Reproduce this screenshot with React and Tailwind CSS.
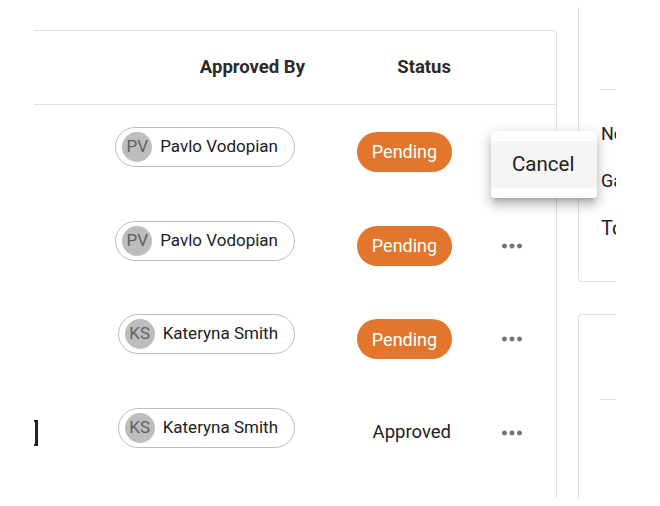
import React from "react";

function Dots() {
  return (
    <svg width="30" height="30" viewBox="0 0 24 24" fill="#757575">
      <path d="M6 10c-1.1 0-2 .9-2 2s.9 2 2 2 2-.9 2-2-.9-2-2-2m12 0c-1.1 0-2 .9-2 2s.9 2 2 2 2-.9 2-2-.9-2-2-2m-6 0c-1.1 0-2 .9-2 2s.9 2 2 2 2-.9 2-2-.9-2-2-2" />
    </svg>
  );
}

function Chip({ initials, name }) {
  return (
    <div className="flex shrink-0 items-center h-[40px] rounded-full border border-[#bdbdbd] pl-[6px] pr-[16px] gap-[8px] whitespace-nowrap">
      <div className="w-[30px] h-[30px] shrink-0 rounded-full bg-[#bdbdbd] flex items-center justify-center text-[17px] text-[#616161]">
        {initials}
      </div>
      <span className="text-[17px] text-[#212121]">{name}</span>
    </div>
  );
}

function Pending() {
  return (
    <div className="h-[40px] w-[95px] rounded-full bg-[#e2762c] flex items-center justify-center text-white text-[18px]">
      Pending
    </div>
  );
}

const rows = [
  { initials: "PV", name: "Pavlo Vodopian", status: "pending", dots: false },
  { initials: "PV", name: "Pavlo Vodopian", status: "pending", dots: true },
  { initials: "KS", name: "Kateryna Smith", status: "pending", dots: true },
  { initials: "KS", name: "Kateryna Smith", status: "approved", dots: true, mark: true },
];

export default function App() {
  return (
    <div className="relative w-[660px] h-[506px] bg-white overflow-hidden font-['Roboto',sans-serif] text-[#212121]">
      <div className="flex items-start h-[498px]">
        <div className="w-[34px] shrink-0" />
        <div className="w-[523px] shrink-0 h-[498px] overflow-hidden pt-[30px]">
          <div className="border-t border-r border-[#e0e0e0] rounded-tr-[4px] h-[600px]">
            <div className="h-[74px] border-b border-[#e0e0e0] flex items-center font-bold text-[18.5px] text-[#2b2b2b] whitespace-nowrap">
              <div className="w-[66px]" />
              <div className="w-[221px] flex justify-end pr-[16px]">Approved By</div>
              <div className="w-[147px] flex justify-end pr-[17px]">Status</div>
              <div className="flex-1" />
            </div>
            {rows.map((r, i) => (
              <div key={i} className="h-[93.7px] flex items-center">
                <div className="w-[66px] flex items-center">
                  {r.mark && (
                    <div className="w-[4px] h-[26px] border-r-[3px] border-t-2 border-b-2 border-[#222]" />
                  )}
                </div>
                <div className="w-[221px] flex justify-end pr-[26px] pb-[10px]">
                  <Chip initials={r.initials} name={r.name} />
                </div>
                <div className="w-[147px] flex justify-end pr-[16px]">
                  {r.status === "pending" ? (
                    <Pending />
                  ) : (
                    <span className="text-[18.5px] text-[#212121] pr-[1px]">Approved</span>
                  )}
                </div>
                <div className="flex-1 pl-[29px] flex items-center">
                  {r.dots && <Dots />}
                </div>
              </div>
            ))}
          </div>
        </div>
        <div className="w-[21px] shrink-0" />
        <div className="w-[38px] shrink-0 h-[498px] overflow-hidden pt-[7px]">
          <div className="h-[275px] border-l border-b border-[#e0e0e0] rounded-bl-[4px] pt-[82px] w-[80px]">
            <div className="ml-[21px] h-px bg-[#e0e0e0]" />
            <div className="pt-[20px] pl-[22px] whitespace-nowrap">
              <div className="h-[47px] flex items-center text-[18px]">Net amount</div>
              <div className="h-[47px] flex items-center text-[18px]">Gas fee</div>
              <div className="h-[47px] flex items-center text-[20px]">Total</div>
            </div>
          </div>
          <div className="mt-[32px] h-[300px] border-l border-t border-[#e0e0e0] rounded-tl-[4px] pt-[84px] w-[80px]">
            <div className="ml-[21px] h-px bg-[#e0e0e0]" />
          </div>
        </div>
      </div>
      <div className="absolute left-[491px] top-[131px] w-[106px] rounded-[4px] bg-white py-[10px] shadow-[0_5px_5px_-3px_rgba(0,0,0,0.2),0_8px_10px_1px_rgba(0,0,0,0.14),0_3px_14px_2px_rgba(0,0,0,0.12)]">
        <div className="h-[47px] flex items-center pl-[21px] bg-[#f5f5f5] text-[20.5px] text-[#212121]">
          Cancel
        </div>
      </div>
    </div>
  );
}
